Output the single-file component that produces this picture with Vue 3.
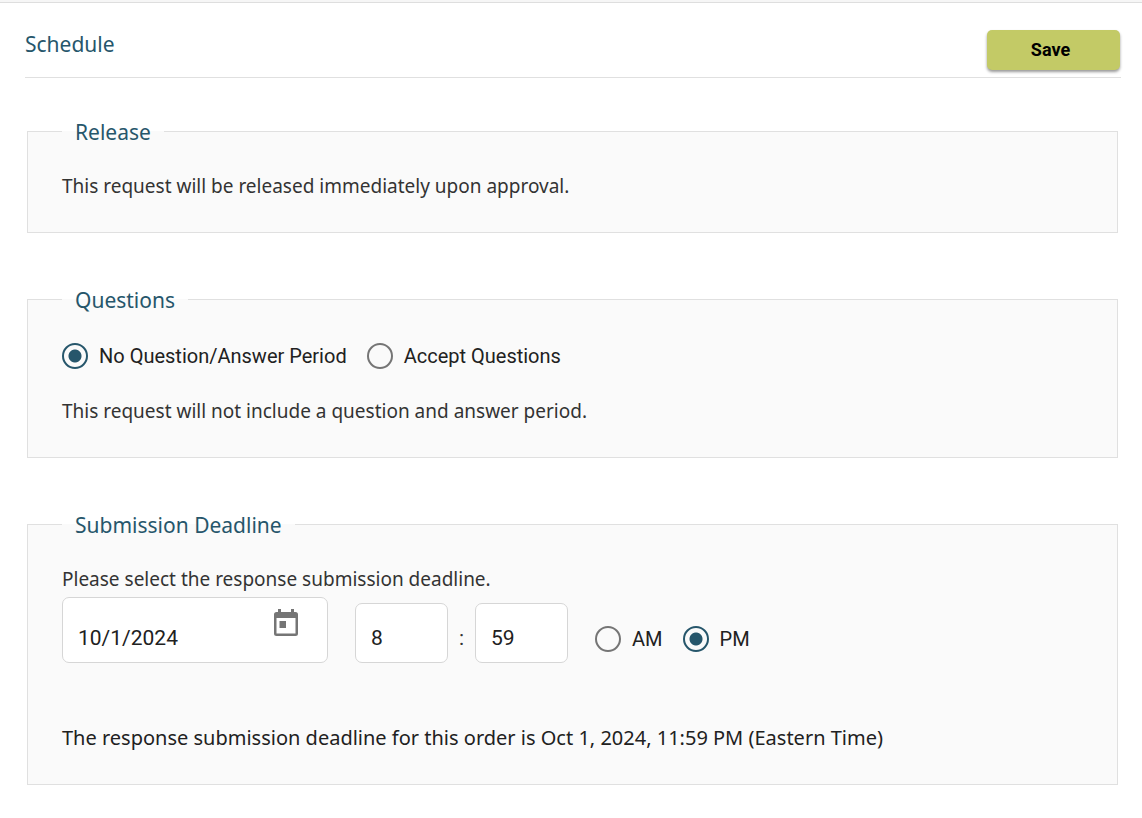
<script setup>
import { ref } from 'vue'

const questionMode = ref('none')
const meridiem = ref('pm')
const date = ref('10/1/2024')
const hour = ref('8')
const minute = ref('59')
</script>

<template>
  <main class="page">
    <header class="header">
      <h1 class="title">Schedule</h1>
      <button type="submit" form="schedule" class="save">Save</button>
    </header>

    <form id="schedule" class="sections" @submit.prevent>
      <fieldset class="section">
        <legend>Release</legend>
        <p class="copy">This request will be released immediately upon approval.</p>
      </fieldset>

      <fieldset class="section">
        <legend>Questions</legend>
        <div class="choices question-mode">
          <label class="choice">
            <input v-model="questionMode" type="radio" name="questions" value="none" />
            <span>No Question/Answer Period</span>
          </label>
          <label class="choice">
            <input v-model="questionMode" type="radio" name="questions" value="accept" />
            <span>Accept Questions</span>
          </label>
        </div>
        <p class="copy">This request will not include a question and answer period.</p>
      </fieldset>

      <fieldset class="section">
        <legend>Submission Deadline</legend>
        <label class="copy" for="deadline-date">Please select the response submission deadline.</label>
        <div class="deadline">
          <div class="date-box">
            <input id="deadline-date" v-model="date" type="text" class="date" />
            <button type="button" class="calendar" aria-label="Open calendar">
              <svg viewBox="0 0 24 27" width="24" height="27" aria-hidden="true">
                <path
                  fill="#757575"
                  fill-rule="evenodd"
                  d="M4 0h3v3h10V0h3v3h1.500a2.500 2.500 0 0 1 2.500 2.500v19a2.500 2.500 0 0 1-2.500 2.500h-19A2.500 2.500 0 0 1 0 24.500v-19A2.500 2.500 0 0 1 2.500 3H4zM2.500 9v15.500h19V9z"
                />
                <path fill="#757575" d="M5.500 12H12v7H5.500z" />
              </svg>
            </button>
          </div>
          <div class="time">
            <input v-model="hour" type="text" class="number" aria-label="Hour" />
            <span class="colon">:</span>
            <input v-model="minute" type="text" class="number" aria-label="Minute" />
          </div>
          <div class="choices meridiem">
            <label class="choice">
              <input v-model="meridiem" type="radio" name="meridiem" value="am" />
              <span>AM</span>
            </label>
            <label class="choice">
              <input v-model="meridiem" type="radio" name="meridiem" value="pm" />
              <span>PM</span>
            </label>
          </div>
        </div>
        <p class="summary">
          The response submission deadline for this order is Oct 1, 2024, 11:59 PM (Eastern Time)
        </p>
      </fieldset>
    </form>
  </main>
</template>

<style>
body {
  margin: 0;
  background: #fff;
}
</style>

<style scoped>
* {
  box-sizing: border-box;
}

.page {
  border-top: 2px solid #f6f6f6;
  box-shadow: inset 0 1px #dedede;
  padding: 1px 21px 33px 25px;
  font-family: "Noto Sans", "Open Sans", sans-serif;
  color: #333;
}

.header {
  display: flex;
  align-items: flex-start;
  justify-content: space-between;
  height: 75px;
  padding: 27px 1px 0 0;
  border-bottom: 1px solid #e0e0e0;
}

.title {
  margin: 0;
  font-size: 21px;
  line-height: 29px;
  font-weight: 400;
  color: #26566b;
}

.save {
  width: 133px;
  height: 40px;
  padding: 0 6px 1px 0;
  border: 0;
  border-radius: 5px;
  background: #c3ca66;
  box-shadow: 0 2px 3px rgba(0, 0, 0, 0.4);
  font: 700 18px/28px Roboto, sans-serif;
  color: #000;
}

.sections {
  display: flex;
  flex-direction: column;
  gap: 52px;
  padding: 39px 3px 0 2px;
}

.section {
  min-width: 0;
  margin: 0;
  padding: 26px 34px 32px;
  border: 1px solid #e0e0e0;
  background: #fafafa;
}

legend {
  padding: 2px 13px 0;
  font-size: 21px;
  line-height: 27px;
  color: #26566b;
}

.copy {
  display: block;
  margin: 0;
  font-size: 19px;
  line-height: 28px;
}

.choices {
  display: flex;
  gap: 20px;
}

.question-mode {
  margin: 1px 0 26px;
}

.choice {
  display: flex;
  align-items: center;
  gap: 11px;
  height: 30px;
  font: 400 20px/30px Roboto, sans-serif;
  color: #212121;
}

.choice input {
  appearance: none;
  width: 26px;
  height: 26px;
  margin: 0;
  border: 2px solid #757575;
  border-radius: 50%;
}

.choice input:checked {
  border-color: #26566b;
  background: radial-gradient(circle, #26566b 6px, transparent 7px);
}

.deadline {
  display: flex;
  flex-wrap: wrap;
  align-items: flex-end;
  gap: 27px;
  margin-top: 4px;
}

.date-box {
  display: flex;
  align-items: flex-start;
  width: 266px;
  height: 66px;
  padding: 11px 29px 0 15px;
  border: 1px solid #d6d6d6;
  border-radius: 7px;
  background: #fff;
}

.date {
  flex: 1;
  min-width: 0;
  height: 54px;
  margin: 0;
  padding: 3px 0 0;
  border: 0;
  background: transparent;
  font: 400 21px/28px Roboto, sans-serif;
  color: #212121;
}

.calendar {
  display: flex;
  padding: 0;
  border: 0;
  background: transparent;
}

.time {
  display: flex;
  align-items: flex-end;
}

.number {
  width: 93px;
  height: 60px;
  padding: 10px 15px 0;
  border: 1px solid #d6d6d6;
  border-radius: 7px;
  background: #fff;
  font: 400 21px/28px Roboto, sans-serif;
  color: #212121;
}

.colon {
  width: 27px;
  padding-bottom: 11px;
  font: 400 21px/28px Roboto, sans-serif;
  text-align: center;
}

.meridiem {
  margin-bottom: 9px;
}

.summary {
  margin: 61px 0 0;
  font-size: 20px;
  line-height: 28px;
  color: #212121;
}
</style>
